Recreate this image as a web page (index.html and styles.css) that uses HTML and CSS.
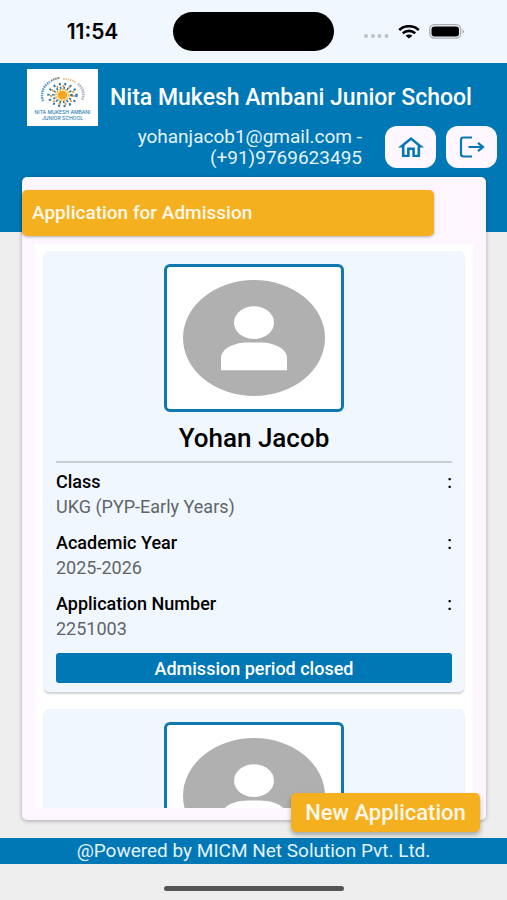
FILE: index.html
```html
<!DOCTYPE html>
<html lang="en">
<head>
    <meta charset="UTF-8">
    <meta name="viewport" content="width=device-width, initial-scale=1.0">
    <title>Nita Mukesh Ambani Junior School</title>
    <link rel="stylesheet" href="styles.css">
</head>
<body>
    <svg width="0" height="0" class="symbols" aria-hidden="true">
        <symbol id="avatar" viewBox="0 0 142 117" preserveAspectRatio="none">
            <ellipse cx="71" cy="58.500" rx="71" ry="58.500" fill="#b0b0b0"/>
            <ellipse cx="71" cy="43" rx="20" ry="16.500" fill="#fff"/>
            <path d="M38 91V79C38 69 51 63 65 63h12c14 0 27 6 27 16v12z" fill="#fff"/>
        </symbol>
    </svg>

    <div class="status-bar">
        <span class="time">11:54</span>
        <span class="island"></span>
        <div class="status-icons">
            <svg width="26" height="6" viewBox="0 0 26 6" class="signal" fill="#bcc1c8">
                <circle cx="3" cy="3" r="2"/><circle cx="10" cy="3" r="2"/><circle cx="16.500" cy="3" r="2"/><circle cx="23.500" cy="3" r="2"/>
            </svg>
            <svg width="22" height="14" viewBox="0 0 22 14" fill="none" stroke="#000" stroke-width="2.600">
                <path d="M1.200 5C6.500-.1 15.500-.1 20.800 5"/>
                <path d="M4.800 8.300c3.600-3.200 8.800-3.200 12.400 0"/>
                <path d="M11 13.500L7.600 10.700c1.900-1.500 4.900-1.500 6.800 0z" fill="#000" stroke="none"/>
            </svg>
            <svg width="36" height="15" viewBox="0 0 36 15">
                <rect x=".7" y=".7" width="31" height="13.400" rx="4.500" fill="none" stroke="#a9adb2" stroke-width="1.300"/>
                <rect x="2.500" y="2.500" width="27.500" height="10" rx="3" fill="#000"/>
                <path d="M33.500 5.200c2 .8 2 3.600 0 4.400z" fill="#a9adb2"/>
            </svg>
        </div>
    </div>

    <header class="header">
        <div class="brand">
            <svg class="logo" viewBox="0 0 71 57" role="img" aria-label="School logo">
                <rect width="71" height="57" fill="#fff"/>
                <g fill="none">
                    <path d="M16 32C13 24 17 16 23 13" stroke="#5b9cc4" stroke-width="2.500" stroke-dasharray="1.500 .8"/>
                    <path d="M24 12c3-2 6-3 9-3" stroke="#777" stroke-width="2" stroke-dasharray="1.500 .8"/>
                    <path d="M36 10c5 0 10 1 13 4" stroke="#f3c391" stroke-width="2" stroke-dasharray="1.500 .8"/>
                    <path d="M51 15c5 4 7 10 4 16" stroke="#b5afc0" stroke-width="2.500" stroke-dasharray="1.500 .8"/>
                    <ellipse cx="35.500" cy="26" rx="14" ry="11" stroke="#3c7fac" stroke-width="2.500" stroke-dasharray="2 3.500"/>
                    <ellipse cx="35.500" cy="26" rx="11.500" ry="9" stroke="#e4a05b" stroke-width="2" stroke-dasharray="2 4"/>
                    <ellipse cx="35.500" cy="26" rx="9" ry="7" stroke="#2f6f9c" stroke-width="2.500" stroke-dasharray="1.500 2"/>
                    <ellipse cx="35.500" cy="26" rx="6.500" ry="5.500" stroke="#f4c14f" stroke-width="2" stroke-dasharray="2 1"/>
                </g>
                <ellipse cx="35.500" cy="26" rx="5" ry="4.200" fill="#f5a623"/>
                <g fill="#2e80b4" font-family="Inter, sans-serif" font-weight="500" text-anchor="middle">
                    <text x="35.500" y="45" font-size="5">NITA MUKESH AMBANI</text>
                    <text x="35.500" y="51" font-size="5">JUNIOR SCHOOL</text>
                </g>
            </svg>
            <h1>Nita Mukesh Ambani Junior School</h1>
        </div>
        <div class="account">
            <p>yohanjacob1@gmail.com -<br>(+91)9769623495</p>
            <button type="button" class="icon-btn" aria-label="Home">
                <svg width="26" height="20" viewBox="2 3 20 17" preserveAspectRatio="none" fill="#0678b5">
                    <path d="M12 5.690l5 4.500V18h-2v-6H9v6H7v-7.810l5-4.500M12 3L2 12h3v8h6v-6h2v6h6v-8h3L12 3z"/>
                </svg>
            </button>
            <button type="button" class="icon-btn" aria-label="Log out">
                <svg width="26" height="22" viewBox="0 0 26 22" fill="none" stroke="#0678b5" stroke-width="2.200">
                    <path d="M13 1.500H4.500Q2 1.500 2 4v14q0 2.500 2.500 2.500H13M9.500 11H24M19 6.800l5 4.200-5 4.200"/>
                </svg>
            </button>
        </div>
    </header>

    <main class="panel">
        <h2 class="panel-title">Application for Admission</h2>
        <div class="list">
            <article class="card">
                <svg class="photo" role="img" aria-label="Student photo"><use href="#avatar"/></svg>
                <h3>Yohan Jacob</h3>
                <dl>
                    <dt><span>Class</span><span>:</span></dt>
                    <dd>UKG (PYP-Early Years)</dd>
                    <dt><span>Academic Year</span><span>:</span></dt>
                    <dd>2025-2026</dd>
                    <dt><span>Application Number</span><span>:</span></dt>
                    <dd>2251003</dd>
                </dl>
                <button type="button" class="status-btn">Admission period closed</button>
            </article>
            <article class="card">
                <svg class="photo" role="img" aria-label="Student photo"><use href="#avatar"/></svg>
            </article>
        </div>
        <button type="button" class="new-btn">New Application</button>
    </main>

    <footer class="footer">@Powered by MICM Net Solution Pvt. Ltd.</footer>
    <div class="home-area"><span></span></div>
</body>
</html>
```
FILE: styles.css
```css
* {
    box-sizing: border-box;
}
body {
    display: flex;
    flex-direction: column;
    height: 100vh;
    margin: 0;
    background-color: #eeeeee;
    color: #000;
    font-family: Roboto, "Liberation Sans", sans-serif;
    font-size: 18px;
}
h1, h2, h3, p, dl, dd {
    margin: 0;
}
h1, h2, h3, dt {
    font-weight: 500;
}
button {
    border: none;
    font-family: inherit;
    font-weight: 500;
    cursor: pointer;
}
.symbols {
    position: absolute;
}

/* phone status bar */
.status-bar {
    display: grid;
    grid-template-columns: 1fr auto 1fr;
    align-items: center;
    flex: none;
    height: 63px;
    background-color: #f1f7ff;
}
.time {
    padding-left: 12px;
    text-align: center;
    font-family: Inter, sans-serif;
    font-size: 21px;
    font-weight: 600;
}
.island {
    width: 161px;
    height: 39px;
    border-radius: 20px;
    background-color: #000;
}
.status-icons {
    display: flex;
    align-items: center;
    justify-content: flex-end;
    gap: 9px;
    padding-right: 42px;
}
.signal {
    margin-top: 8px;
}

/* header */
.header {
    flex: none;
    height: 169px;
    padding: 6px 10px 0;
    background-color: #0078b5;
    color: #fff;
}
.brand {
    display: flex;
    align-items: center;
    gap: 12px;
    padding-left: 17px;
}
.logo {
    flex: none;
    width: 71px;
    height: 57px;
}
h1 {
    font-size: 23px;
    white-space: nowrap;
}
.account {
    display: flex;
    justify-content: flex-end;
    align-items: center;
    gap: 10px;
}
.account p {
    margin-right: 13px;
    color: #e4f3fc;
    font-size: 19px;
    line-height: 21px;
    text-align: right;
}
.icon-btn {
    display: flex;
    align-items: center;
    justify-content: center;
    width: 51px;
    height: 42px;
    padding: 0;
    border-radius: 12px;
    background-color: #fef7ff;
}

/* main panel, pulled up over the header */
.panel {
    position: relative;
    display: flex;
    flex-direction: column;
    flex: 1;
    min-height: 0;
    margin: -55px 21px 18px 22px;
    padding: 13px 13px 12px;
    border-radius: 5px;
    background-color: #fdf6fe;
    box-shadow: 0 1px 4px rgba(0, 0, 0, 0.3);
}
.panel-title {
    flex: none;
    margin: 0 39px 8px -13px;
    padding-left: 10px;
    border-radius: 5px;
    background-color: #f5b020;
    box-shadow: 0 1px 3px rgba(0, 0, 0, 0.3);
    color: #fff8ea;
    font-size: 19px;
    line-height: 46px;
}
.list {
    display: flex;
    flex-direction: column;
    gap: 17px;
    flex: 1;
    min-height: 0;
    padding: 7px 9px 0;
    overflow: hidden;
    background-color: #fff;
}
.card {
    display: flex;
    flex-direction: column;
    flex: none;
    padding: 13px 12px 9px;
    border-radius: 5px;
    background-color: #f0f7ff;
    box-shadow: 0 2px 2px rgba(0, 0, 0, 0.18);
}
.photo {
    align-self: center;
    width: 180px;
    height: 148px;
    padding: 13px 16px;
    border: 3px solid #0f78ae;
    border-radius: 6px;
    background-color: #fff;
}
h3 {
    padding: 10px 0 7px;
    border-bottom: 2px solid #c8cdd6;
    font-size: 26px;
    line-height: 32px;
    text-align: center;
}
dl {
    padding: 6px 0 12px;
    line-height: 25px;
}
dt {
    display: flex;
    justify-content: space-between;
}
dd {
    color: #606469;
}
dd + dt {
    margin-top: 11px;
}
.status-btn {
    height: 30px;
    border-radius: 3px;
    background-color: #0078b5;
    color: #fff;
    font-size: 18px;
}
.new-btn {
    position: absolute;
    right: 6px;
    bottom: -12px;
    width: 189px;
    height: 39px;
    padding: 0;
    border-radius: 5px;
    background-color: #f5b020;
    box-shadow: 0 3px 5px rgba(0, 0, 0, 0.3);
    color: #fff8ea;
    font-size: 22px;
}

/* footer */
.footer {
    flex: none;
    background-color: #0078b5;
    color: #e4f3fc;
    font-size: 19px;
    line-height: 26px;
    text-align: center;
}
.home-area {
    display: flex;
    justify-content: center;
    flex: none;
    height: 36px;
    padding-top: 22px;
}
.home-area span {
    width: 180px;
    height: 5px;
    border-radius: 3px;
    background-color: #555;
}
```
